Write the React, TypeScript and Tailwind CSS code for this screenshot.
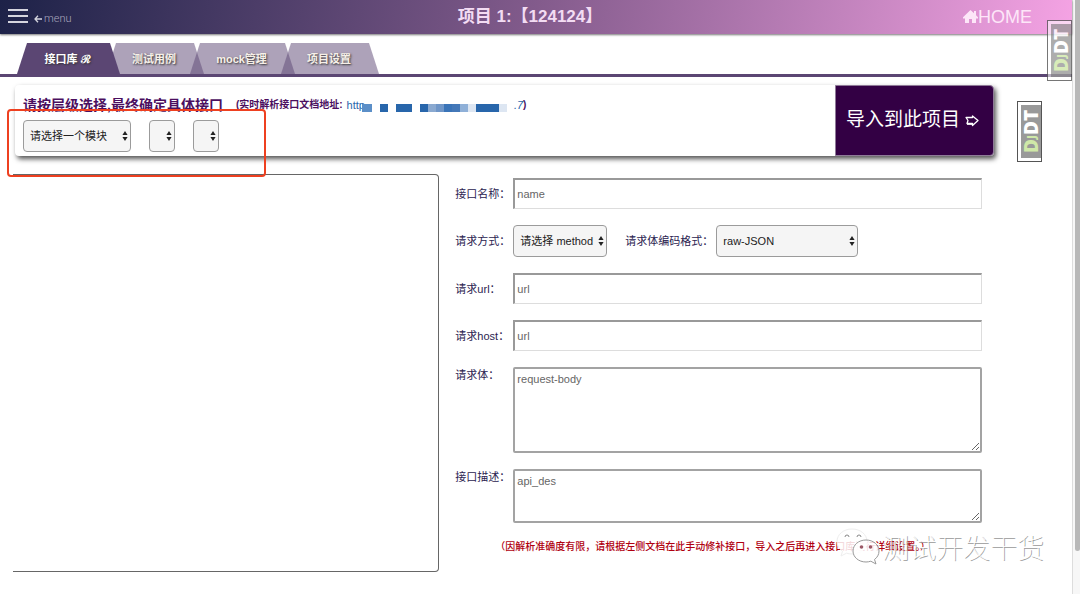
import type { ReactNode } from 'react';

const tabs = [
    { label: '接口库 ℛ', active: true, width: 'w-[103px]' },
    { label: '测试用例', active: false, width: 'w-[98px]' },
    { label: 'mock管理', active: false, width: 'w-[105px]' },
    { label: '项目设置', active: false, width: 'w-[98px]' },
];

// x, width, colour of every block over the hidden part of the address
const maskBlocks: [number, number, string][] = [
    [0, 10, '#5b8fc8'],
    [18, 8, '#2866ab'],
    [34, 16, '#2866ab'],
    [58, 8, '#2866ab'],
    [66, 8, '#8aa9d0'],
    [74, 8, '#6f96c8'],
    [82, 8, '#3a74b8'],
    [90, 8, '#4478b8'],
    [98, 8, '#8fb0d8'],
    [106, 8, '#dde6f2'],
    [114, 23, '#2866ab'],
    [137, 8, '#dde6f2'],
];

const inputClass =
    'h-[31px] min-w-0 flex-1 border border-t-2 border-l-2 border-t-[#999] border-l-[#999] border-r-[#ddd] border-b-[#ddd] bg-white px-[2px] placeholder:text-[#666]';
const textareaClass =
    'min-w-0 flex-1 resize rounded-[2px] border-2 border-[#a3a3a3] bg-white px-[2px] py-[3px] leading-[14px] placeholder:text-[#666]';

function Picker({ id, label, options, width }: { id: string; label?: string; options: string[]; width: string }) {
    return (
        <span className={`relative inline-block ${width}`}>
            <select
                id={id}
                aria-label={label}
                className="h-8 w-full appearance-none rounded-[4px] border border-[#9b9b9b] bg-[#f5f5f5] pl-[6px] text-[11px] text-[#222]"
            >
                {options.map((option) => (
                    <option key={option}>{option}</option>
                ))}
            </select>
            <svg viewBox="0 0 6 10" className="pointer-events-none absolute top-[11px] right-[3px] h-[10px] w-[6px]" fill="#222">
                <path d="M3 0 5.6 4H.4zM3 10 .4 6h5.2z" />
            </svg>
        </span>
    );
}

function Field({ id, label, tall, children }: { id: string; label: string; tall?: boolean; children: ReactNode }) {
    return (
        <div className="flex items-start">
            <label htmlFor={id} className={`w-[58px] shrink-0 leading-[16px] ${tall ? 'pt-0' : 'pt-2'}`}>
                {label}
            </label>
            {children}
        </div>
    );
}

function DebugHandle({ className }: { className: string }) {
    return (
        <button type="button" className={`absolute h-[61px] w-[25px] border border-[#555] py-[3px] pl-[3px] ${className}`}>
            <span className="flex h-full w-full rotate-180 items-center justify-center bg-[#999] font-['Open_Sans','Noto_Sans',sans-serif] text-[19px] leading-none font-extrabold text-white [writing-mode:vertical-rl]">
                <span className="text-[#cfe8a8]">
                    D<span className="text-[11px]">J</span>
                </span>
                DT
            </span>
        </button>
    );
}

function Watermark() {
    return (
        <div className="pointer-events-none absolute right-[28px] bottom-[28px] flex items-center gap-[2px]">
            <svg viewBox="0 0 44 38" className="h-[38px] w-[44px]" fill="#fff">
                <path
                    d="M16 1C7.500 1 1 6.500 1 13.500c0 4 2 7.500 5.500 9.800L5 28l5.500-2.800c1.800.5 3.500.8 5.500.8 8.500 0 15-5.500 15-12.500S24.500 1 16 1z"
                    fillOpacity=".85"
                    stroke="#eee"
                />
                <path
                    d="M30 12c-7.500 0-13 5-13 11s5.500 11 13 11c1.700 0 3.300-.3 4.800-.8L40 36l-1.500-4.500c2.800-2 4.500-5 4.500-8.500 0-6-5.500-11-13-11z"
                    fillOpacity=".85"
                    stroke="#999"
                />
                <g fill="none" stroke="#888">
                    <path d="M9 9a2 2 0 0 1 4 0M21 9a2 2 0 0 1 4 0" />
                </g>
                <g fill="#9b5866">
                    <circle cx="25.500" cy="19" r="1.800" />
                    <circle cx="34.500" cy="19" r="1.800" />
                </g>
            </svg>
            <span className="font-['Noto_Sans_CJK_SC',sans-serif] text-[27px] leading-[34px] font-thin text-white [text-shadow:1px_1px_0_#999]">
                测试开发干货
            </span>
        </div>
    );
}

export default function App() {
    return (
        <div className="flex min-h-screen bg-white font-['Liberation_Sans','Noto_Sans_CJK_SC',sans-serif] text-[11px] text-[#2b2350]">
            <div className="relative min-w-0 flex-1">
                <header className="grid h-[34px] grid-cols-3 items-center bg-linear-100 from-[#1d2248] via-[#835b8c] to-[#f5a3e4] shadow-[0_1px_2px_#777]">
                    <button type="button" className="flex items-center pl-2 text-[#a9a6bd]">
                        <svg viewBox="0 0 20 14" className="mb-[2px] h-[14px] w-[20px]" stroke="#d5d5de" strokeWidth="2">
                            <path d="M0 1h20M0 7h20M0 13h20" />
                        </svg>
                        <svg viewBox="0 0 8 8" className="mt-1 ml-[6px] h-2 w-2" fill="none" stroke="#d5d5de" strokeWidth="1.300">
                            <path d="M8 4H1M4 .8 1 4l3 3.200" />
                        </svg>
                        <span className="mt-1 ml-[2px] font-['Roboto'] text-[11px] font-light">menu</span>
                    </button>
                    <h1 className="pr-3 text-center text-[17px] leading-[24px] font-bold whitespace-nowrap text-[#f3dcf3]">项目 1:【124124】</h1>
                    <a href="#home" className="mr-10 flex items-center justify-self-end text-[18px] leading-[20px] text-[#fde6f8]">
                        <svg viewBox="0 0 15 14" className="h-[14px] w-[15px]" fill="currentColor">
                            <path d="M7.500 0 11 3.200V1h2v4.200L15 7.300V8.500H13V13H9V9H6v4H2V8.500H0V7.300z" />
                        </svg>
                        HOME
                    </a>
                </header>

                <nav className="mt-[9px] flex h-[34px] border-b-[3px] border-[#5b4673] pl-[17px]">
                    {tabs.map((tab) => (
                        <button
                            key={tab.label}
                            type="button"
                            className={`-mr-[14px] h-[31px] pt-[2px] pr-[2px] font-bold [clip-path:polygon(10px_0,calc(100%_-_10px)_0,100%_100%,0_100%)] [text-shadow:1px_1px_2px_#333] ${tab.width} ${
                                tab.active ? 'relative z-10 bg-[#5b4673] text-white' : 'bg-[#5b4673]/50 text-[#f6f0e8]'
                            }`}
                        >
                            {tab.label}
                        </button>
                    ))}
                </nav>

                <section className="mt-2 mr-[78px] ml-[15px] flex h-[71px] rounded-[4px] bg-white shadow-[2px_3px_5px_#555]">
                    <div className="min-w-0 flex-1 px-2 pt-[10px]">
                        <div className="flex items-center leading-[20px] font-bold whitespace-nowrap text-[#4b0f5f]">
                            <h2 className="text-[14px]">请按层级选择,最终确定具体接口</h2>
                            <p className="ml-[13px] flex items-center text-[10px]">
                                (实时解析接口文档地址:
                                <a href="#doc" className="ml-1 flex items-center text-[11px] font-normal text-[#2866ab]">
                                    http
                                    <svg viewBox="0 0 152 8" className="mt-[5px] -ml-[3px] h-2 w-[152px]">
                                        {maskBlocks.map(([x, width, fill]) => (
                                            <rect key={x} x={x} width={width} height="8" fill={fill} />
                                        ))}
                                    </svg>
                                    <i>.7</i>
                                </a>
                                )
                            </p>
                        </div>
                        <div className="mt-[5px] flex gap-[18px]">
                            <Picker id="module" label="模块" options={['请选择一个模块']} width="w-[108px]" />
                            <Picker id="group" label="分组" options={['']} width="w-[26px]" />
                            <Picker id="api" label="接口" options={['']} width="w-[26px]" />
                        </div>
                    </div>
                    <button
                        type="button"
                        className="flex w-[159px] items-center justify-center gap-[5px] rounded-r-[4px] border border-[#8f7a98] bg-[#330044] pr-1 text-[19px] text-white"
                    >
                        导入到此项目
                        <svg viewBox="0 0 14 12" className="h-3 w-[14px]" fill="none" stroke="currentColor" strokeWidth="1.300" strokeLinejoin="round">
                            <path d="M1 2.500h6.500V1L13 5.500 7.500 10.500V8.500H2L3 5.500z" />
                            <path d="M2 9.200h5" />
                        </svg>
                    </button>
                </section>

                <main className="mt-[18px] flex pr-[90px] pl-[13px]">
                    <div className="h-[398px] w-[44%] shrink-0 rounded-r-[4px] border border-l-0 border-[#666]" />
                    <form className="flex min-w-0 flex-1 flex-col gap-4 pt-1 pl-4">
                        <Field id="name" label="接口名称：">
                            <input id="name" placeholder="name" className={inputClass} />
                        </Field>
                        <Field id="method" label="请求方式：">
                            <Picker id="method" options={['请选择 method']} width="w-[94px]" />
                            <label htmlFor="encoding" className="mr-[3px] ml-[18px] pt-2 leading-[16px]">
                                请求体编码格式：
                            </label>
                            <Picker id="encoding" options={['raw-JSON']} width="w-[142px]" />
                        </Field>
                        <Field id="url" label="请求url：">
                            <input id="url" placeholder="url" className={inputClass} />
                        </Field>
                        <Field id="host" label="请求host：">
                            <input id="host" placeholder="url" className={inputClass} />
                        </Field>
                        <Field id="body" label="请求体：" tall>
                            <textarea id="body" placeholder="request-body" className={`h-[86px] ${textareaClass}`} />
                        </Field>
                        <Field id="des" label="接口描述：" tall>
                            <textarea id="des" placeholder="api_des" className={`h-[54px] ${textareaClass}`} />
                        </Field>
                        <p className="ml-[40px] text-[10px] leading-[16px] font-medium whitespace-nowrap text-[#b00010]">
                            （因解析准确度有限，请根据左侧文档在此手动修补接口，导入之后再进入接口库进行详细设置。）
                        </p>
                    </form>
                </main>

                <div className="pointer-events-none absolute top-[109px] left-[7px] z-20 h-[68px] w-[259px] rounded-[4px] border-2 border-[#ee4020]" />
                <DebugHandle className="top-[20px] right-0 bg-white/70 opacity-80" />
                <DebugHandle className="top-[101px] right-[30px] bg-white" />
                <Watermark />
            </div>

            <div className="w-2 border-l border-[#ddd] bg-[#f7f7f7] pl-[2px]">
                <div className="h-[551px] rounded-b-[3px] bg-[#b8b8b8]" />
            </div>
        </div>
    );
}
